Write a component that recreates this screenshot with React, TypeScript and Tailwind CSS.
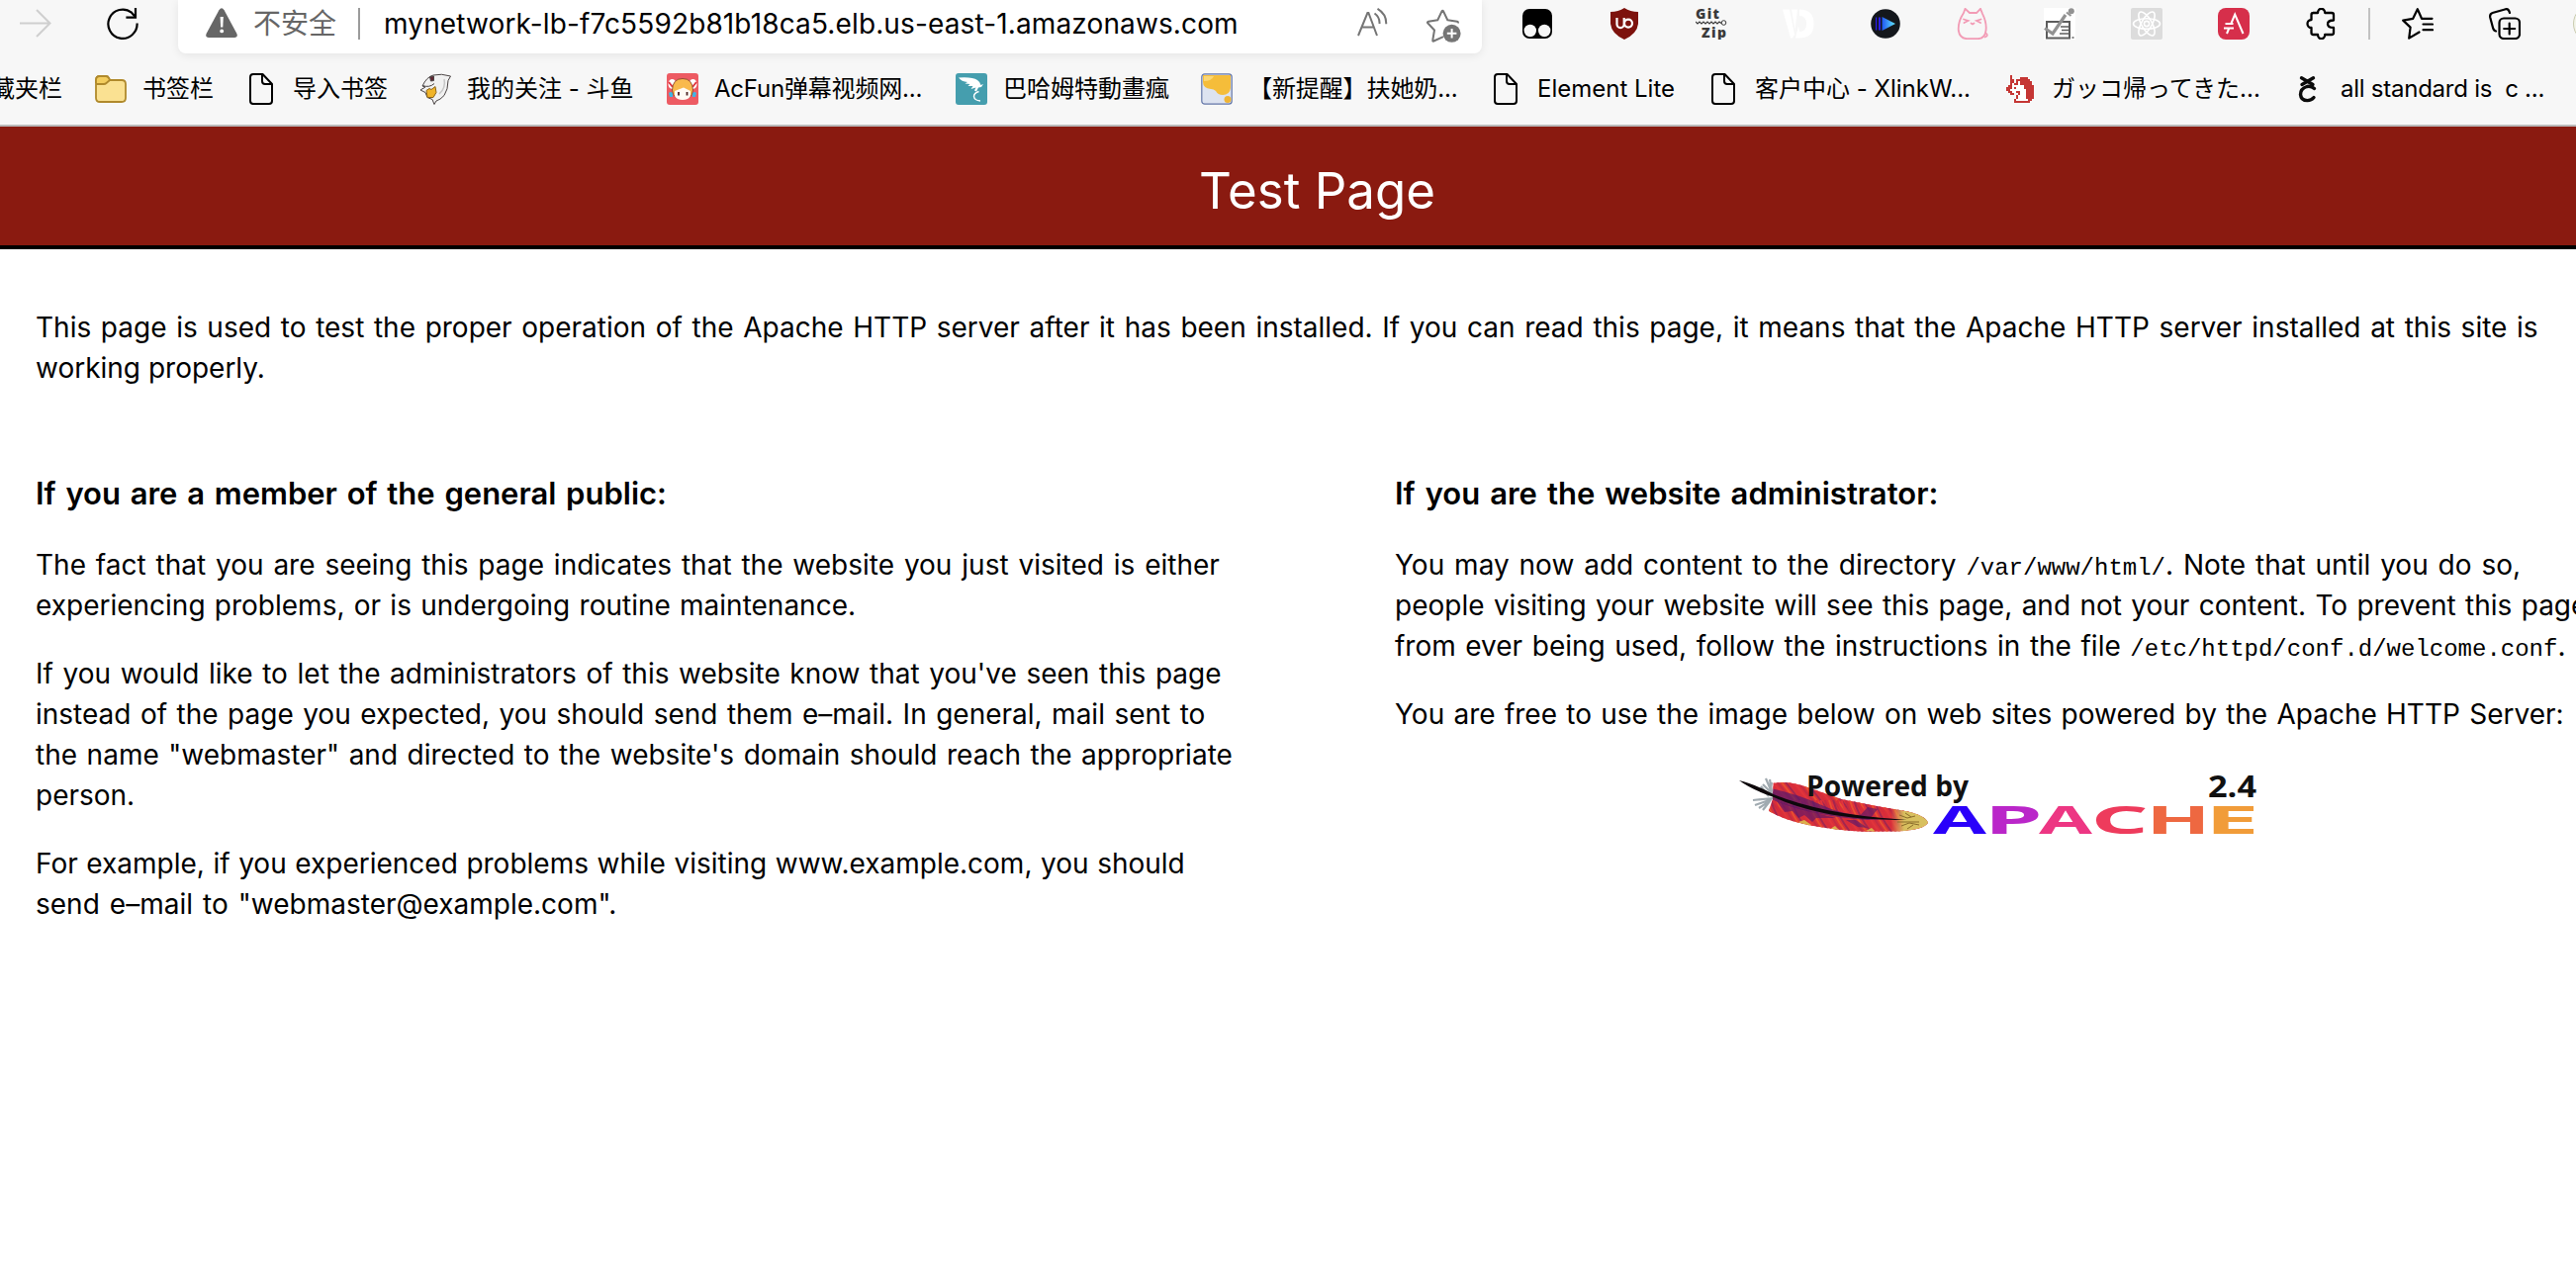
import type { ReactNode } from 'react';

const UI = "font-[Inter,'Noto_Sans_CJK_SC',sans-serif]";

/* ---------- toolbar icons ---------- */

function ForwardIcon() {
  return (
    <svg className="h-8 w-8" viewBox="0 0 32 32" fill="none" stroke="#cfcfcf" strokeWidth="2">
      <path d="M0 15.5h31M17 2l13.5 13.5L17 29" />
    </svg>
  );
}

function ReloadIcon() {
  return (
    <svg className="h-8 w-8" viewBox="0 0 32 32" fill="none" stroke="#000" strokeWidth="2.2">
      <path d="M30.6 15.5A14.6 14.6 0 1 1 25 4.7l3.5 4" />
      <path d="M29 0v9.6h-9.6" />
    </svg>
  );
}

function WarningIcon() {
  return (
    <svg className="h-8 w-8" viewBox="0 0 32 32">
      <path d="M13.4 2.2Q16-1.6 18.6 2.2L31.4 26Q32.8 30 29 30H3Q-.8 30 .6 26Z" fill="#666" />
      <path d="M14.6 9h3.2l-.5 10.5h-2.2z" fill="#fff" />
      <circle cx="16.2" cy="23.4" r="1.9" fill="#fff" />
    </svg>
  );
}

function ReadAloudIcon() {
  return (
    <svg className="h-8 w-8" viewBox="0 0 32 32" fill="none" stroke="#757575" strokeWidth="2">
      <path d="M1 28 10.4 5h1L20 28M4.4 19.6h12.8" />
      <path d="M17.5 5.5q5.5 4 5 10.5M20.5 .8q9.200 5.500 8.700 15.500" />
    </svg>
  );
}

function StarAddIcon() {
  return (
    <svg className="h-9 w-9" viewBox="0 0 36 36" fill="none" stroke="#757575" strokeWidth="2" strokeLinejoin="round">
      <path d="M17 29.200 7.300 33.500Q6 34 6.300 32.500L8 22.500 1.200 15.300Q.5 14.200 2 13.800L11.300 12.300 15.600 3.300Q16.300 2 17 3.300L21.300 12.300 31 13.700Q32.500 14.200 31.500 15.300" />
      <circle cx="25.600" cy="25.800" r="9" fill="#757575" stroke="none" />
      <path d="M25.600 21v9.600M20.800 25.800h9.600" stroke="#fff" />
    </svg>
  );
}

function MaskIcon() {
  return (
    <svg className="h-8 w-8" viewBox="0 0 32 32">
      <rect x="1" y="1" width="30" height="30" rx="7" fill="#000" />
      <circle cx="8.800" cy="23" r="6.200" fill="#f7f7f7" />
      <circle cx="23.200" cy="23" r="6.200" fill="#f7f7f7" />
    </svg>
  );
}

function ShieldIcon() {
  return (
    <svg className="h-8 w-8" viewBox="0 0 32 32">
      <path d="M16 0Q22 4 30 4V16Q29 26 16 32 3 26 2 16V4Q10 4 16 0Z" fill="#7d120d" />
      <path d="M8.500 10v6.500a3.600 3.600 0 0 0 7.200 0V10" fill="none" stroke="#fff" strokeWidth="2.200" />
      <circle cx="20" cy="15.600" r="4" fill="none" stroke="#fff" strokeWidth="2.200" />
    </svg>
  );
}

function GitZipIcon() {
  return (
    <svg className="h-8 w-8" viewBox="0 0 32 32" fontFamily="'Open Sans', sans-serif" fontWeight="800" fontSize="14" fill="#3a3a3a">
      <text x="0" y="11" textLength="24">Git</text>
      <text x="6" y="30" textLength="25">Zip</text>
      <path d="M0 14l2 2 2-2 2 2 2-2 2 2 2-2 2 2 2-2 2 2 2-2 2 2 2-2 2 1.500" fill="none" stroke="#3a3a3a" strokeWidth="1.200" />
      <circle cx="28.500" cy="15" r="2.300" fill="none" stroke="#3a3a3a" />
    </svg>
  );
}

function VdIcon() {
  return (
    <svg className="h-8 w-8" viewBox="0 0 32 32" fill="#fff">
      <path d="M0 1.500h7L12 27l-2 3.500H8zM9 1.500h6L12.500 22zM17 1.500q14.500 0 14.500 14.500 0 14.500-14.500 14.500h-4L16 18l1 6q7 0 7-8t-7-8z" />
    </svg>
  );
}

function PlayerIcon() {
  return (
    <svg className="h-8 w-8" viewBox="0 0 32 32">
      <defs>
        <linearGradient id="play">
          <stop offset="0" stopColor="#1f55f5" />
          <stop offset="1" stopColor="#62ecff" />
        </linearGradient>
      </defs>
      <circle cx="16" cy="16" r="14.800" fill="#14171c" />
      <path d="M6 9.500h1.200v13H6zM9 9.500h2v13H9z" fill="#2a1cf0" />
      <path d="M12.500 9 26 16 12.500 23Z" fill="url(#play)" />
    </svg>
  );
}

function CatIcon() {
  return (
    <svg className="h-8 w-8" viewBox="0 0 32 32" fill="none" stroke="#f29bb5" strokeWidth="1.800" strokeLinecap="round">
      <path d="M7 5 8.500 .8 13 5h7l4-4.200 2 5q4.500 9 3.500 17-1 8-8 8.400H10Q3 30.500 1.800 23 1 14 7 5Z" />
      <path d="M7 11.500l4.500 1.500L7.500 15M24.500 11.500 20 13l4 2M14.500 15.500l1.500 1 1.500-1M30 26q2 2.500-1.500 3.500" />
    </svg>
  );
}

function ChecklistIcon() {
  return (
    <svg className="h-8 w-8" viewBox="0 0 32 32" fill="none">
      <rect width="32" height="32" fill="#fff" />
      <rect x="3" y="14" width="23" height="16.500" stroke="#5c5c5c" strokeWidth="2" />
      <path d="M17 19h8M18 22.500h7M16 26h9" stroke="#5c5c5c" strokeWidth="1.500" />
      <path d="M1 20.500 9 26 22 7" stroke="#929292" strokeWidth="3.200" />
      <path d="M23 4.500 27.500 8" stroke="#929292" strokeWidth="2" />
      <circle cx="27.800" cy="3.200" r="3" fill="#929292" />
      <path d="M28.500 30h2" stroke="#5c5c5c" strokeWidth="1.500" />
    </svg>
  );
}

function ReactIcon() {
  return (
    <svg className="h-8 w-8" viewBox="0 0 32 32" fill="none" stroke="#fff" strokeWidth="1.600">
      <rect width="32" height="32" rx="2" fill="#dcdcdc" stroke="none" />
      <ellipse cx="16" cy="16" rx="13.500" ry="5.200" />
      <ellipse cx="16" cy="16" rx="13.500" ry="5.200" transform="rotate(60 16 16)" />
      <ellipse cx="16" cy="16" rx="13.500" ry="5.200" transform="rotate(120 16 16)" />
      <circle cx="16" cy="16" r="2.600" />
    </svg>
  );
}

function RedAIcon() {
  return (
    <svg className="h-8 w-8" viewBox="0 0 32 32" fill="none" stroke="#fff" strokeWidth="2">
      <rect width="32" height="32" rx="8" fill="#d62f4b" stroke="none" />
      <path d="M9 26l2.500-6M13.500 15.500 17.200 6.500 25.500 26M7.500 16h8M6 20.500h10" />
    </svg>
  );
}

function PuzzleIcon() {
  return (
    <svg className="h-8 w-8" viewBox="0 0 32 32" fill="none" stroke="#000" strokeWidth="2.300" strokeLinejoin="round">
      <path d="M8 5h5a3.600 4.200 0 0 1 7.200 0H27q2 0 2 2v5.500q-6 0-6 3.700t6 3.700V25q0 2-2 2h-6.800a3.600 4.200 0 0 1-7.200 0H8.500q-2 0-2-2v-5a4 4 0 0 1 0-8V7q0-2 2-2" />
    </svg>
  );
}

function FavoritesIcon() {
  return (
    <svg className="h-8 w-8" viewBox="0 0 32 32" fill="none" stroke="#000" strokeWidth="2.200" strokeLinejoin="round" strokeLinecap="round">
      <path d="M17.500 24.500 7.200 30.600 8.600 19.600 1.200 12.600 11.200 10.800 15.800 1.200 20 10.800H30.500M21.500 16.500h9.500M21.500 22.200h9.500" />
    </svg>
  );
}

function CollectionsIcon() {
  return (
    <svg className="h-8 w-8" viewBox="0 0 32 32" fill="none" stroke="#000" strokeWidth="2.200" strokeLinecap="round">
      <rect x="10.500" y="10.500" width="20.500" height="20.500" rx="4.500" />
      <path d="M20.700 15.500v11M15.200 21h11M7 23.500Q4.800 23 4 20L1.200 9.500Q.6 6 3.600 5L17 1.200Q20 .6 21 5" />
    </svg>
  );
}

/* ---------- bookmark icons ---------- */

function FolderIcon() {
  return (
    <svg className="h-8 w-8" viewBox="0 0 32 32" stroke="#b08a2c" strokeWidth="1.800">
      <path d="M1 9V7q0-4 4-4h6q2 0 3 2l1 2h12q4 0 4 4v14q0 4-4 4H5q-4 0-4-4Z" fill="#fae192" />
      <path d="M1 10V7q0-4 4-4h6q2 0 3 2l1 2-3.500 3Q10.500 11 9 11H1" fill="#f3cd5e" />
    </svg>
  );
}

function FileIcon() {
  return (
    <svg className="h-8 w-8" viewBox="0 0 32 32" fill="none" stroke="#000" strokeWidth="2" strokeLinejoin="round">
      <path d="M17.500 1H8Q5 1 5 4v24q0 3 3 3h16q3 0 3-3V11ZM17 1v7q0 3 3 3h7" />
    </svg>
  );
}

function SharkIcon() {
  return (
    <svg className="h-8 w-8" viewBox="0 0 32 32" stroke="#4b4545" strokeWidth="1" strokeLinejoin="round">
      <path d="M3 13Q7 4 14 2q8-2 17.500 1L29 7.500q0 9-4 15-4 4.500-8 5.500l-2 3.500-2-5-5-2-2-5-5-2.500 5-3z" fill="#f1f1f1" />
      <path d="M3 12.500q7 2.500 12-2" fill="none" />
      <path d="M7 17.500l3-2 2 1 4-3 1 6-3 5h-6z" fill="#f0b429" stroke="#8b6419" />
      <path d="M10.500 3.500l4-.5v4.500l-3 .5z" fill="#602733" />
      <path d="M25 6q2 9-5 15" fill="none" stroke="#c6c6c6" strokeWidth="1.500" />
    </svg>
  );
}

function GirlIcon() {
  return (
    <svg className="h-8 w-8" viewBox="0 0 32 32">
      <rect width="32" height="32" rx="3" fill="#ed5b63" />
      <ellipse cx="5.500" cy="11" rx="4" ry="5" fill="#fff" />
      <ellipse cx="26.500" cy="11" rx="4" ry="5" fill="#fff" />
      <path d="M2 9l4 5M30 9l-4 5" stroke="#e0353f" strokeWidth="2" />
      <path d="M2 20q2-2 4 0v4H3zM30 20q-2-2-4 0v4h3z" fill="#3fb5e2" />
      <path d="M5.500 17Q6 5.500 16 5.500T26.500 17q-.5 5-3 7H8.500q-2.500-2-3-7Z" fill="#f9b94c" stroke="#7b3b2d" strokeWidth=".8" />
      <path d="M8 18 17 14.500 24 18v5q-2 4-8 4t-8-4Z" fill="#fffaf4" />
      <path d="M12 19v3.500M20.500 19v3.500" stroke="#4b2323" strokeWidth="1.800" />
    </svg>
  );
}

function DragonIcon() {
  return (
    <svg className="h-8 w-8" viewBox="0 0 32 32">
      <rect width="32" height="32" rx="3" fill="#459eae" />
      <path d="M3 4.500q14-1 19 2.500 3 2 3.500 5l2.500-1-2 3-3 .5-2 4-2-1 1.500-3-5 1.500 2-3-5 0 2-2-5-.5 2.500-1.500Q6 8.500 3 4.500Z" fill="#fff" />
      <path d="M23.500 18.500q-5 1.500-5 5 .5 4 6.500 4.500" fill="none" stroke="#fff" strokeWidth="1.400" />
    </svg>
  );
}

function HoneyIcon() {
  return (
    <svg className="h-8 w-8" viewBox="0 0 32 32">
      <rect x=".8" y=".8" width="30.400" height="30.400" rx="3" fill="#dde3f0" stroke="#6477a8" strokeWidth="1.200" />
      <path d="M2 2h28v13q-1 7-8 7-5 0-7-4-2-2-5-2-8-1-8-7Z" fill="#f5bd3a" />
      <path d="M3 3h10q-2 5-10 5Z" fill="#fbd774" />
      <circle cx="27" cy="26.500" r="3.500" fill="#f0b433" />
    </svg>
  );
}

function UnicornIcon() {
  return (
    <svg className="h-8 w-8" viewBox="0 0 32 32" shapeRendering="crispEdges">
      <path d="M6 2h2v4h2v4h2V6h4V4h8v2h2v2h2v4h2v14h-2v2h-2v2H10v-4h2v-4h2v-2h-4v2H6v-2H4v-2H2v-4h2v-2h2Z" fill="#c53634" />
      <path d="M8 10h2v2h4V8h2v4h4v4h2v10h2v2H12v-2h2v-4h2v-4h-4v2H8v-2H6v-2h2z" fill="#fff" />
      <path d="M10 14h2v2h-2z" fill="#c53634" />
    </svg>
  );
}

function CeeIcon() {
  return (
    <svg className="h-8 w-8" viewBox="0 0 32 32" fill="none" stroke="#0b0b0b" strokeWidth="3.400" strokeLinecap="round">
      <path d="M8.500 4.800 20 11.500M20.500 4.800 9 11.500" />
      <path d="M21.500 15.500Q18 12.500 14 13.500 7.500 15.500 7.500 21.500 8 27.600 14.500 27.600 18.500 27.600 21 24.500" />
    </svg>
  );
}

/* ---------- data ---------- */

const extensions: ReactNode[] = [
  <MaskIcon />, <ShieldIcon />, <GitZipIcon />, <VdIcon />, <PlayerIcon />,
  <CatIcon />, <ChecklistIcon />, <ReactIcon />, <RedAIcon />, <PuzzleIcon />,
];

const bookmarks: { icon: ReactNode; label: string; width: string }[] = [
  { icon: <FolderIcon />, label: '书签栏', width: 'w-[152px]' },
  { icon: <FileIcon />, label: '导入书签', width: 'w-[176px]' },
  { icon: <SharkIcon />, label: '我的关注 - 斗鱼', width: 'w-[250px]' },
  { icon: <GirlIcon />, label: 'AcFun弹幕视频网...', width: 'w-[292px] tracking-[-0.2px]' },
  { icon: <DragonIcon />, label: '巴哈姆特動畫瘋', width: 'w-[248px]' },
  { icon: <HoneyIcon />, label: '【新提醒】扶她奶...', width: 'w-[292px] tracking-[-0.1px]' },
  { icon: <FileIcon />, label: 'Element Lite', width: 'w-[220px]' },
  { icon: <FileIcon />, label: '客户中心 - XlinkW...', width: 'w-[300px]' },
  { icon: <UnicornIcon />, label: 'ガッコ帰ってきた...', width: 'w-[292px]' },
  { icon: <CeeIcon />, label: 'all standard is  c ...', width: 'w-[286px] tracking-[-0.25px]' },
];

/* ---------- browser chrome ---------- */

function BrowserBar() {
  return (
    <header className={`h-32 border-b-2 border-[#bababa] bg-[#f7f7f7] ${UI}`}>
      <div className="flex h-[54px] items-start">
        <div className="flex w-[180px] shrink-0 gap-[56px] pl-5 pt-2">
          <ForwardIcon />
          <ReloadIcon />
        </div>
        <div className="flex h-[54px] w-[1318px] shrink-0 items-start rounded-b-lg bg-white pt-2 shadow-[0_2px_10px_rgba(0,0,0,0.08)]">
          <div className="ml-7"><WarningIcon /></div>
          <span className="ml-4 text-[28px] leading-8 text-[#666]">不安全</span>
          <div className="ml-[22px] h-8 w-0.5 bg-[#9b9b9b]" />
          <span className="ml-6 text-[28px] leading-[33px] tracking-[0.13px] text-black">
            mynetwork-lb-f7c5592b81b18ca5.elb.us-east-1.amazonaws.com
          </span>
          <div className="ml-auto"><ReadAloudIcon /></div>
          <div className="ml-[38px] mr-5"><StarAddIcon /></div>
        </div>
        <div className="ml-10 flex items-center gap-14 pt-2">
          {extensions.map((icon, i) => (
            <div key={i}>{icon}</div>
          ))}
        </div>
        <div className="ml-8 mt-2 h-8 w-0.5 shrink-0 bg-[#c2c2c2]" />
        <div className="ml-8 flex shrink-0 gap-14 pt-2">
          <FavoritesIcon />
          <CollectionsIcon />
        </div>
        <div className="ml-[53px] mt-1 h-10 w-10 shrink-0 rounded-full border border-[#c9cbb0] bg-[#f4f5ea]" />
      </div>
      <nav className="flex h-[72px] whitespace-pre text-[24px] leading-8 text-black">
        <div className="flex w-24 shrink-0 pt-5">
          <span className="-ml-[9px]">藏夹栏</span>
        </div>
        {bookmarks.map((b) => (
          <div key={b.label} className={`flex shrink-0 gap-4 pt-5 ${b.width}`}>
            {b.icon}
            <span>{b.label}</span>
          </div>
        ))}
      </nav>
    </header>
  );
}

/* ---------- page ---------- */

const barbs = Array.from({ length: 48 }, (_, i) => i);
const barbColors = ['#e2343c', '#c42b42', '#e8502f', '#a3264f', '#d92b3a'];

function ApacheLogo() {
  return (
    <svg className="block h-[60px] w-[522px] overflow-visible" viewBox="0 0 522 60" fontFamily="'Open Sans', sans-serif" fontWeight="700">
      <defs>
        <clipPath id="vane">
          <path d="M34.600 8.700Q52 6 71.400 13.700L103.600 25 139 32 168 37Q188 41 191 48.600 188 56 160 57.500L125 57.700Q95 56 69.600 51 45 46 30 37L34 25Z" />
        </clipPath>
        <linearGradient id="tip" gradientUnits="userSpaceOnUse" x1="0" x2="192" y1="0" y2="0">
          <stop offset="0.80" stopColor="#d8c05f" stopOpacity="0" />
          <stop offset="0.87" stopColor="#d8c05f" />
        </linearGradient>
      </defs>
      <g fill="none" stroke="#8f9ba2" strokeWidth="2.200" opacity="0.85">
        <path d="M34 20 24 10M33 18 27 4M33 17 31 5M30 22 22 12M34 24 14 26M33 25 16 31M32 26 20 34M31 27 24 36M32 14 33 8" />
      </g>
      <g clipPath="url(#vane)">
        <rect width="192" height="60" fill="#d8303a" />
        {barbs.map((i) => (
          <g key={i} strokeWidth="1.800" fill="none">
            <path d={`M${i * 4.2 - 14} 0q10 12 30 38`} stroke={barbColors[i % 5]} />
            <path d={`M${i * 4.2 - 14} 26q4 16 20 36`} stroke={barbColors[(i + 2) % 5]} />
          </g>
        ))}
        <path d="M32 14Q60 20 86 32T160 45L130 46Q70 42 30 24Z" fill="#4c1670" opacity="0.65" />
        <path d="M38 27Q65 36 98 44L78 44 74 48 66 41 60 44 54 37 46 38Z" fill="#5e1668" opacity="0.65" />
        <path d="M120 44 130 33l10 2-8 10zM108 46l10 0 12 8-10-1z" fill="#4f1670" opacity="0.6" />
        <path d="M60 48l6-2 7 5-6 2zM92 55l5-3 5 5h-7zM128 57l6-3 4 4z" fill="#dcae4b" />
        <rect width="192" height="60" fill="url(#tip)" />
        <path d="M162 41l8 3 8-2M164 52l8-3 10 2M160 48h22M168 39l6 4M170 55l6-4" stroke="#8a6c2b" strokeWidth="1" fill="none" />
      </g>
      <path d="M0 6Q14 9 35.700 20.500 60 30 89 36q34 7 81 10-50 0-82-6.500-30-6-53-16.500Q12 15 0 6Z" fill="#0d080b" />
      <text x="68" y="22.300" fontSize="28.500" fill="#111" textLength="164" lengthAdjust="spacingAndGlyphs">Powered by</text>
      <text x="474" y="23" fontSize="31" fill="#111" textLength="49" lengthAdjust="spacingAndGlyphs">2.4</text>
      <g fontSize="38.500">
        <text x="196" y="59.600" fill="#2a00fa" textLength="54" lengthAdjust="spacingAndGlyphs">A</text>
        <text x="247.800" y="59.600" fill="#ba26c9" textLength="59" lengthAdjust="spacingAndGlyphs">P</text>
        <text x="303" y="59.600" fill="#ed3683" textLength="54" lengthAdjust="spacingAndGlyphs">A</text>
        <text x="355.500" y="59.600" fill="#ee3b5c" textLength="58.400" lengthAdjust="spacingAndGlyphs">C</text>
        <text x="411.300" y="59.600" fill="#ee6841" textLength="65.400" lengthAdjust="spacingAndGlyphs">H</text>
        <text x="471" y="59.600" fill="#f19c39" textLength="54.800" lengthAdjust="spacingAndGlyphs">E</text>
      </g>
    </svg>
  );
}

function Line({ spacing, children }: { spacing: string; children: ReactNode }) {
  return <span className={`block ${spacing}`}>{children}</span>;
}

function Code({ children }: { children: ReactNode }) {
  return (
    <code className="font-['Liberation_Mono',monospace] text-[24px] leading-[0] [word-spacing:0]">{children}</code>
  );
}

export default function App() {
  return (
    <div className="h-[1286px] w-[2604px] overflow-hidden bg-white text-black">
      <BrowserBar />
      <main className={`whitespace-nowrap text-[28px] leading-[41px] ${UI}`}>
        <h1 className="h-[124px] border-b-4 border-black bg-[#8a1a10] pl-[59px] pt-1 text-center text-[51px] font-normal leading-[121px] text-white">
          Test Page
        </h1>
        <p className="pl-9 pt-[59px]">
          <Line spacing="[word-spacing:1.78px]">
            This page is used to test the proper operation of the Apache HTTP server after it has been installed. If you can read this page, it means that the Apache HTTP server installed at this site is
          </Line>
          <Line spacing="[word-spacing:0px]">working properly.</Line>
        </p>
        <div className="flex pt-[85px]">
          <section className="w-[1410px] shrink-0 pl-9">
            <h2 className="text-[31px] font-semibold leading-[41px] [word-spacing:1.95px]">If you are a member of the general public:</h2>
            <div className="mt-8 flex flex-col gap-7">
              <p>
                <Line spacing="[word-spacing:2px]">The fact that you are seeing this page indicates that the website you just visited is either</Line>
                <Line spacing="[word-spacing:1.4px]">experiencing problems, or is undergoing routine maintenance.</Line>
              </p>
              <p>
                <Line spacing="[word-spacing:1.75px]">If you would like to let the administrators of this website know that you've seen this page</Line>
                <Line spacing="[word-spacing:1.6px]">instead of the page you expected, you should send them e–mail. In general, mail sent to</Line>
                <Line spacing="[word-spacing:1.7px]">the name "webmaster" and directed to the website's domain should reach the appropriate</Line>
                <Line spacing="[word-spacing:0px]">person.</Line>
              </p>
              <p>
                <Line spacing="[word-spacing:0.7px]">For example, if you experienced problems while visiting www.example.com, you should</Line>
                <Line spacing="[word-spacing:2.2px]">send e–mail to "webmaster@example.com".</Line>
              </p>
            </div>
          </section>
          <section className="w-[1194px] shrink-0">
            <h2 className="text-[31px] font-semibold leading-[41px] [word-spacing:2.2px]">If you are the website administrator:</h2>
            <div className="mt-8 flex flex-col gap-7">
              <p>
                <Line spacing="[word-spacing:2.02px]">
                  You may now add content to the directory <Code>/var/www/html/</Code>. Note that until you do so,
                </Line>
                <Line spacing="[word-spacing:1.5px]">people visiting your website will see this page, and not your content. To prevent this page</Line>
                <Line spacing="[word-spacing:1.7px]">
                  from ever being used, follow the instructions in the file <Code>/etc/httpd/conf.d/welcome.conf</Code>.
                </Line>
              </p>
              <p>
                <Line spacing="[word-spacing:1.4px]">You are free to use the image below on web sites powered by the Apache HTTP Server:</Line>
              </p>
            </div>
            <div className="ml-[348px] mt-10">
              <ApacheLogo />
            </div>
          </section>
        </div>
      </main>
    </div>
  );
}
